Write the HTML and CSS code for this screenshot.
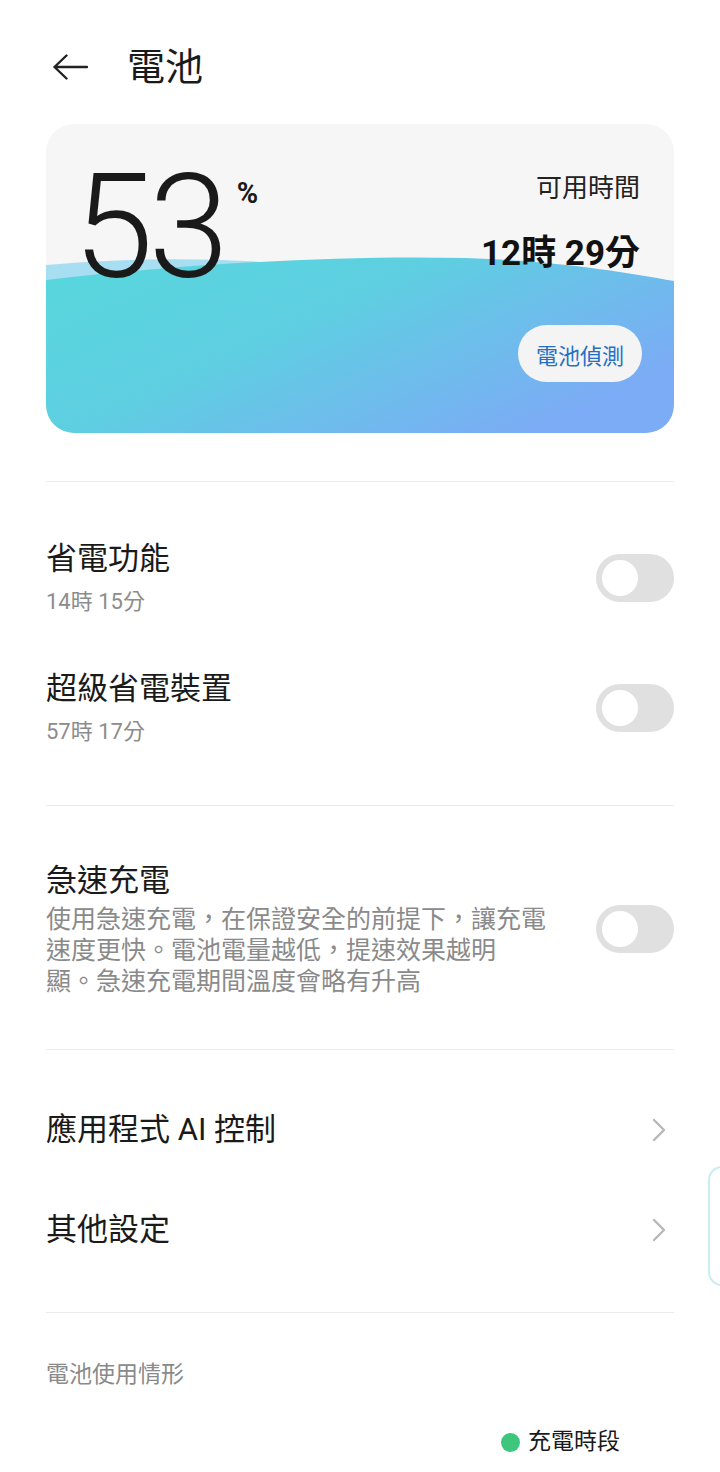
FILE: index.html
```html
<!DOCTYPE html>
<html lang="zh-Hant">
<head>
  <meta charset="UTF-8">
  <title>電池</title>
  <link rel="stylesheet" href="styles.css">
</head>
<body>

<div class="page">

  <div class="header">
    <svg class="back" width="36" height="26" viewBox="0 0 36 26">
      <path d="M2.5 13 H35 M14.5 1.5 L2.5 13 L14.5 24.5" fill="none" stroke="#222" stroke-width="2.4" stroke-linecap="round" stroke-linejoin="round"/>
    </svg>
    <h1 class="title">電池</h1>
  </div>

  <div class="card">
    <svg class="wave" viewBox="0 0 628 309" preserveAspectRatio="none">
      <defs>
        <linearGradient id="fill" x1="0" y1="0" x2="1" y2="0.6">
          <stop offset="0" stop-color="#58d7dc"/>
          <stop offset="0.45" stop-color="#5ecfe1"/>
          <stop offset="1" stop-color="#7bacf5"/>
        </linearGradient>
      </defs>
      <path d="M0 141 Q150 128 300 145 L300 200 L0 200 Z" fill="#a8def2"/>
      <path d="M0 156 C140 140 290 131 420 134 C510 137 570 147 628 157 V309 H0 Z" fill="url(#fill)"/>
    </svg>

    <div class="level">
      <span class="num">53</span>
      <span class="pct">%</span>
    </div>

    <div class="remain">
      <div class="remain-label">可用時間</div>
      <div class="remain-time">12時 29分</div>
      <div class="check">電池偵測</div>
    </div>
  </div>

  <div class="section first">
    <div class="row">
      <div class="info">
        <div class="name">省電功能</div>
        <div class="sub">14時 15分</div>
      </div>
      <div class="switch"><div class="knob"></div></div>
    </div>
    <div class="row">
      <div class="info">
        <div class="name">超級省電裝置</div>
        <div class="sub">57時 17分</div>
      </div>
      <div class="switch"><div class="knob"></div></div>
    </div>
  </div>

  <div class="section fast">
    <div class="row">
      <div class="info">
        <div class="name">急速充電</div>
        <div class="desc">使用急速充電，在保證安全的前提下，讓充電<br>速度更快。電池電量越低，提速效果越明<br>顯。急速充電期間溫度會略有升高</div>
      </div>
      <div class="switch"><div class="knob"></div></div>
    </div>
  </div>

  <div class="section links">
    <div class="link">
      <div class="name">應用程式 AI 控制</div>
      <svg class="chev" width="14" height="24" viewBox="0 0 14 24">
        <path d="M2 2 L12 12 L2 22" fill="none" stroke="#b8b8b8" stroke-width="2.4" stroke-linecap="round" stroke-linejoin="round"/>
      </svg>
    </div>
    <div class="link">
      <div class="name">其他設定</div>
      <svg class="chev" width="14" height="24" viewBox="0 0 14 24">
        <path d="M2 2 L12 12 L2 22" fill="none" stroke="#b8b8b8" stroke-width="2.4" stroke-linecap="round" stroke-linejoin="round"/>
      </svg>
    </div>
  </div>

  <div class="usage">
    <div class="usage-title">電池使用情形</div>
    <div class="legend">
      <span class="dot"></span>
      <span class="legend-text">充電時段</span>
    </div>
  </div>

</div>

<div class="edge"></div>

</body>
</html>
```

FILE: styles.css
```css
body {
  margin: 0;
  background: #fff;
  font-family: Roboto, "Noto Sans CJK TC", sans-serif;
  color: #1a1a1a;
}
.page {
  padding: 0 46px;
}
.header {
  display: flex;
  align-items: center;
  height: 70px;
  padding: 32px 0 22px;
}
.back {
  margin-left: 6px;
}
.title {
  margin: 0 0 0 39px;
  font-size: 38px;
  font-weight: 400;
  line-height: 48px;
}

.card {
  position: relative;
  height: 309px;
  border-radius: 28px;
  background: #f6f6f6;
  overflow: hidden;
  display: flex;
  justify-content: space-between;
}
.wave {
  position: absolute;
  left: 0;
  top: 0;
  width: 100%;
  height: 100%;
}
.level {
  position: relative;
  display: flex;
  align-items: flex-start;
  padding: 31px 0 0 27px;
}
.num {
  font-size: 145px;
  font-weight: 300;
  line-height: 145px;
  letter-spacing: -5px;
  color: #1a1a1a;
}
.pct {
  margin: 24px 0 0 13px;
  font-size: 29px;
  font-weight: 700;
  line-height: 29px;
  color: #1a1a1a;
}
.remain {
  position: relative;
  display: flex;
  flex-direction: column;
  align-items: flex-end;
  padding: 47px 34px 0 0;
}
.remain-label {
  font-size: 26px;
  line-height: 34px;
  color: #222;
}
.remain-time {
  margin-top: 27px;
  font-size: 35px;
  font-weight: 700;
  line-height: 44px;
  color: #111;
}
.check {
  margin: 49px -2px 0 0;
  width: 124px;
  height: 57px;
  border-radius: 29px;
  background: #f4f4f4;
  color: #2470c4;
  font-size: 22px;
  display: flex;
  align-items: center;
  justify-content: center;
}

.section {
  border-top: 1px solid #ececec;
}
.card + .section {
  margin-top: 48px;
}
.first {
  padding: 31px 0 32px;
}
.row {
  display: flex;
  align-items: center;
  justify-content: space-between;
  padding: 26px 0;
}
.info {
  display: flex;
  flex-direction: column;
  gap: 8px;
}
.name {
  font-size: 31px;
  line-height: 40px;
  color: #1a1a1a;
}
.sub {
  font-size: 22px;
  line-height: 30px;
  color: #8c8c8c;
}
.switch {
  width: 78px;
  height: 48px;
  box-sizing: border-box;
  padding: 6px;
  border-radius: 24px;
  background: #e0e0e0;
  flex-shrink: 0;
}
.knob {
  width: 36px;
  height: 36px;
  border-radius: 50%;
  background: #fff;
}

.fast {
  padding: 29px 0 26px;
}
.fast .info {
  gap: 3px;
}
.desc {
  font-size: 25px;
  line-height: 31px;
  color: #8a8a8a;
}

.links {
  padding: 30px 0 32px;
}
.link {
  display: flex;
  align-items: center;
  justify-content: space-between;
  padding: 30px 0;
}
.chev {
  margin-right: 8px;
}

.usage {
  border-top: 1px solid #ececec;
  padding-top: 47px;
}
.usage-title {
  font-size: 23px;
  line-height: 30px;
  color: #8a8a8a;
}
.legend {
  display: flex;
  align-items: center;
  justify-content: flex-end;
  margin-top: 37px;
  padding-right: 54px;
}
.dot {
  width: 19px;
  height: 19px;
  border-radius: 50%;
  background: #3ec67c;
  margin-right: 8px;
}
.legend-text {
  font-size: 23px;
  line-height: 30px;
  color: #1a1a1a;
}

.edge {
  position: absolute;
  top: 1166px;
  right: -20px;
  width: 28px;
  height: 116px;
  border: 2px solid #c8eef1;
  border-radius: 14px;
  background: #fff;
}
```
